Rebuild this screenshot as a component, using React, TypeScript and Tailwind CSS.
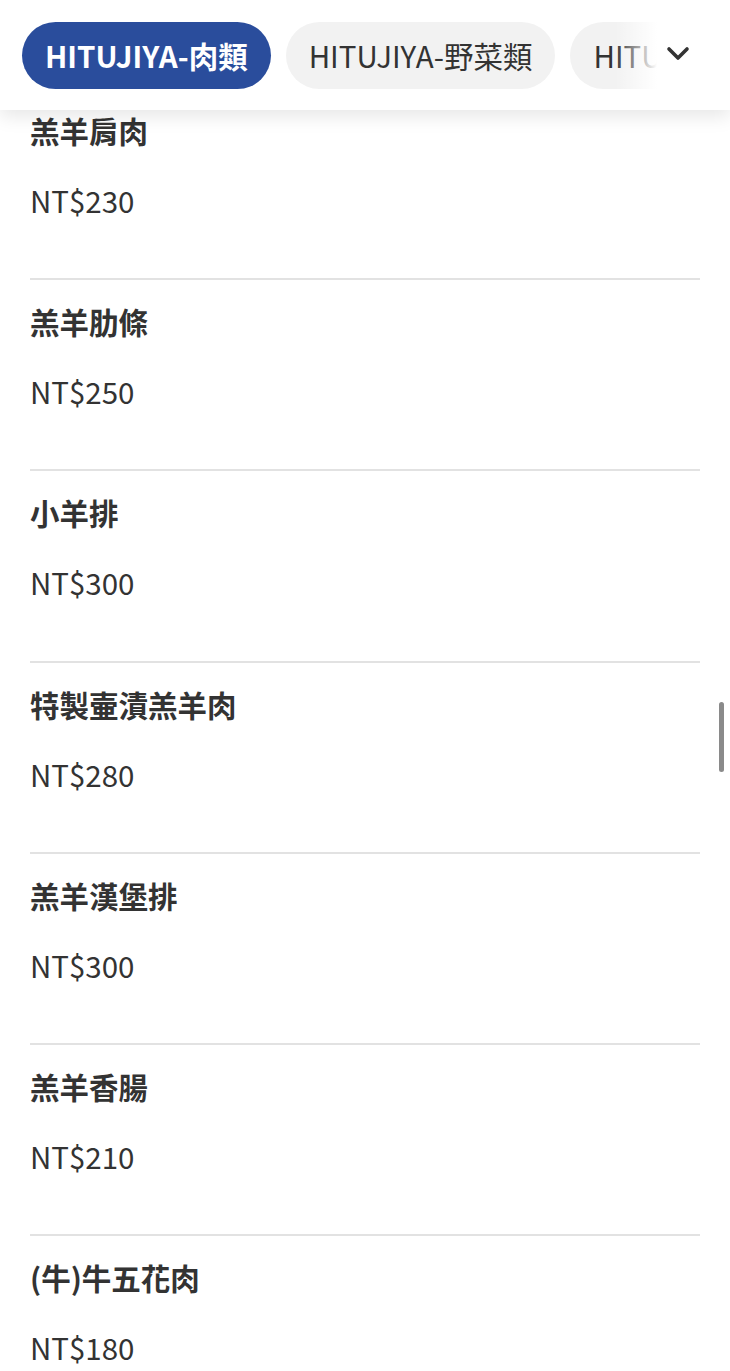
import React from "react";

const items = [
  { name: "羔羊肩肉", price: "NT$230" },
  { name: "羔羊肋條", price: "NT$250" },
  { name: "小羊排", price: "NT$300" },
  { name: "特製壷漬羔羊肉", price: "NT$280" },
  { name: "羔羊漢堡排", price: "NT$300" },
  { name: "羔羊香腸", price: "NT$210" },
  { name: "(牛)牛五花肉", price: "NT$180" },
];

export default function App() {
  return (
    <div
      className="relative w-[730px] h-[1371px] overflow-hidden bg-white text-[#333333]"
      style={{ fontFamily: '"Noto Sans CJK TC", "Noto Sans", sans-serif' }}
    >
      <div className="relative z-10 h-[110px] bg-white shadow-[0_6px_18px_rgba(0,0,0,0.10)]">
        <div className="flex gap-[15px] pl-[22px] pt-[22px] overflow-hidden">
          <div className="shrink-0 h-[67px] rounded-full bg-[#2a4d9c] px-[23px] flex items-center text-[29.5px] font-bold text-white leading-none">
            HITUJIYA-肉類
          </div>
          <div className="shrink-0 h-[67px] rounded-full bg-[#f2f2f2] px-[23px] flex items-center text-[29.5px] text-[#333333] leading-none">
            HITUJIYA-野菜類
          </div>
          <div className="shrink-0 h-[67px] rounded-full bg-[#f2f2f2] px-[23px] flex items-center text-[29.5px] text-[#333333] leading-none">
            HITUJIYA-其他
          </div>
        </div>
        <div className="absolute right-0 top-[20px] h-[72px] w-[115px] bg-[linear-gradient(to_right,rgba(255,255,255,0),#ffffff_42px)]" />
        <div className="absolute left-[664px] top-[42px]">
          <svg width="28" height="24" viewBox="0 0 28 24">
            <path d="M5 7 L14 16 L23 7" fill="none" stroke="#333333" strokeWidth="3.6" strokeLinecap="round" strokeLinejoin="round" />
          </svg>
        </div>
      </div>
      <div className="px-[30px]">
        {items.map((it, i) => (
          <div
            key={i}
            className={
              i === 0
                ? "pt-[2px] pb-[60.2px]"
                : "border-t-2 border-[#e2e2e2] pt-[23px] pb-[60.2px]"
            }
          >
            <div className="text-[29.5px] font-bold leading-[36px]">{it.name}</div>
            <div className="mt-[34px] text-[29.5px] leading-[36px]">{it.price}</div>
          </div>
        ))}
      </div>
      <div className="absolute left-[719px] top-[702px] h-[70px] w-[5px] rounded-full bg-[#8a8a8a]" />
    </div>
  );
}
